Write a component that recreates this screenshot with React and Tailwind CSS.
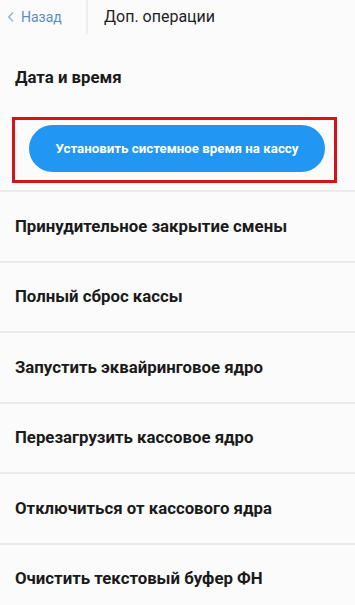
export default function App() {
  const items = [
    "Принудительное закрытие смены",
    "Полный сброс кассы",
    "Запустить эквайринговое ядро",
    "Перезагрузить кассовое ядро",
    "Отключиться от кассового ядра",
    "Очистить текстовый буфер ФН",
  ];
  return (
    <div className="w-[355px] h-[605px] overflow-hidden bg-[#fbfbfb] text-[#1a1a1a]" style={{ fontFamily: "Roboto, 'Noto Sans', sans-serif" }}>
      <div className="h-[34px] flex items-stretch">
        <div className="w-[86px] flex items-center pl-[7px] gap-[6px] text-[#5d8fbf] text-[14px]">
          <svg width="8" height="12" viewBox="0 0 8 12" className="shrink-0">
            <path d="M6 1.5 L1.8 6 L6 10.5" fill="none" stroke="#9fb6cc" strokeWidth="1.6" />
          </svg>
          <span>Назад</span>
        </div>
        <div className="w-[2px] bg-[#eeeeee]" />
        <div className="flex items-center pl-[16px] text-[16px] text-[#1e1e1e]">Доп. операции</div>
      </div>
      <div className="h-[83px] flex items-center pl-[15px] pt-[4px] text-[16.8px] font-bold">Дата и время</div>
      <div className="ml-[12px] mr-[18px] h-[66px] border-[3px] border-[#d1141c] flex items-center pl-[14px] pr-[9px] pb-[3px]">
        <div className="w-full h-[47px] rounded-full bg-[#2196f3] flex items-center justify-center text-white text-[13.3px] font-bold">
          Установить системное время на кассу
        </div>
      </div>
      <div className="h-[7px]" />
      {items.map((t) => (
        <div key={t}>
          <div className="h-[2px] bg-[#ebebeb]" />
          <div className="h-[68.5px] flex items-center pl-[15px] text-[16.8px] font-bold">{t}</div>
        </div>
      ))}
    </div>
  );
}
